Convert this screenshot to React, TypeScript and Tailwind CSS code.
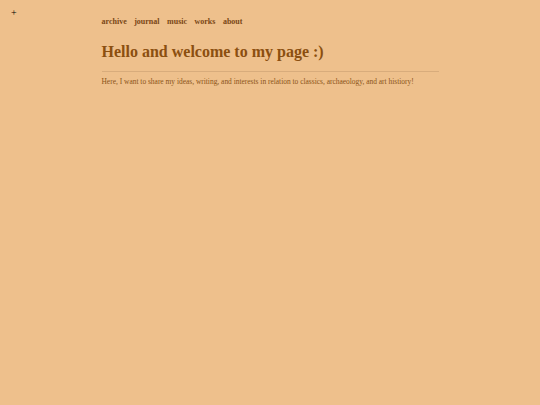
export default function App() {
  const links = ["archive", "journal", "music", "works", "about"];

  return (
    <div
      className="relative min-h-[405px] w-full bg-[#eec08c] text-[#8b4f10]"
      style={{ fontFamily: '"Liberation Serif", Georgia, serif' }}
    >
      <div className="absolute left-[11px] top-[8px] text-[10px] leading-none text-black">+</div>

      <div className="mx-auto w-[337px] pt-[17px]">
        <nav className="flex gap-[7.5px] text-[8px] font-bold leading-[10px] text-[#7a4716]">
          {links.map((l) => (
            <a key={l} href="#">
              {l}
            </a>
          ))}
        </nav>

        <h1 className="mt-[14px] text-[16px] font-bold leading-[22px]">Hello and welcome to my page :)</h1>

        <div className="mt-[8px] h-px bg-[#d8ac7c]" />

        <p className="mt-[5px] text-[7.45px] leading-[10px] text-[#8b5418]">
          Here, I want to share my ideas, writing, and interests in relation to classics, archaeology, and art histiory!
        </p>
      </div>
    </div>
  );
}
